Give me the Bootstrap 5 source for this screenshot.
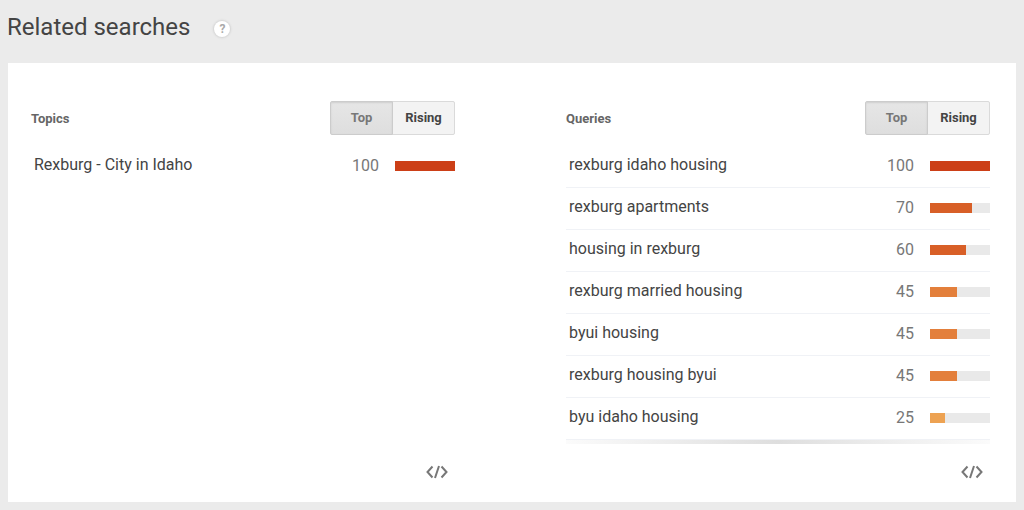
<!DOCTYPE html>
<html lang="en">
<head>
<meta charset="utf-8">
<meta name="viewport" content="width=device-width, initial-scale=1">
<title>Related searches</title>
<link href="https://cdn.jsdelivr.net/npm/bootstrap@5.3.0/dist/css/bootstrap.min.css" rel="stylesheet">
<style>
  body { background: #ebebeb; color: #444; font-family: Roboto, "Liberation Sans", sans-serif; }
  .page-head { padding: 12px 7px 21px; }
  .page-title { font-size: 24px; line-height: 30px; color: #444; }
  .help-btn { width: 16px; height: 16px; background: #fff; color: #aaa; font-size: 12px; line-height: 16px; font-weight: 700; box-shadow: 0 0 2px 1px #d2d2d2; }
  .panel { padding: 38px 26px 20px 23px; }
  .panel-cols { column-gap: 111px; }
  .panel-head { margin-bottom: 10px; }
  .list-title { font-size: 13px; line-height: 20px; font-weight: 700; color: #666; padding-top: 2px; }
  .toggle-btn { width: 63px; height: 34px; padding: 0; font-size: 13px; line-height: 20px; font-weight: 700; color: #444; background: #f3f3f3; border: 1px solid #dadada; border-radius: 2px; }
  .toggle-btn.active { color: #777 !important; background: linear-gradient(#e6e6e6, #dedede) !important; border-color: #ccc !important; box-shadow: inset 0 1px 2px rgba(0,0,0,.1); }
  .terms { font-size: 16px; line-height: 20px; }
  .terms th, .terms td { height: 42px; padding: 0; vertical-align: middle; }
  .terms th { font-weight: 400; padding: 0 0 2px 3px; color: #444; }
  .terms tr + tr > * { border-top: 1px solid #f0f2f6; }
  .terms .score { width: 60px; padding-right: 16px; text-align: right; color: #777; }
  .terms .meter { width: 60px; }
  .track, .fill { height: 10px; }
  .track { background: #e9e9e9; }
  .l100 { background: #cc3f17; }
  .l70 { background: #d85f27; }
  .l45 { background: #e37f3b; }
  .l25 { background: #eda252; }
  .scroll-shade { height: 5px; border-top: 1px solid #f0f2f6; background: linear-gradient(90deg, #fbfbfb, #dedede 50%, #fbfbfb); }
  .embed-btn { margin: 18px 6px 0 0; }
</style>
</head>
<body>
<header class="page-head d-flex align-items-center">
  <h1 class="page-title fw-normal m-0">Related searches</h1>
  <button type="button" class="help-btn border-0 rounded-circle p-0 ms-4 mt-1" aria-label="Help">?</button>
</header>
<main class="px-2 pb-2">
  <div class="panel panel-cols bg-white d-flex">
    <section class="flex-fill w-50 d-flex flex-column">
      <div class="panel-head d-flex align-items-center justify-content-between">
        <h2 class="list-title mb-0">Topics</h2>
        <div class="btn-group" role="group" aria-label="Topics order">
          <button type="button" class="btn toggle-btn active">Top</button>
          <button type="button" class="btn toggle-btn">Rising</button>
        </div>
      </div>
      <table class="terms w-100">
        <tbody>
          <tr><th scope="row">Rexburg - City in Idaho</th><td class="score">100</td><td class="meter"><div class="track"><div class="fill l100" style="width:100%"></div></div></td></tr>
        </tbody>
      </table>
      <button type="button" class="embed-btn btn p-0 border-0 lh-1 align-self-end mt-auto" aria-label="Embed topics">
        <svg width="24" height="20" viewBox="0 0 24 20" fill="none" stroke="#777" stroke-width="2"><path d="M7.500 4.500 2.500 10l5 5.500M16.500 4.500l5 5.500-5 5.500M14 4l-4 12"/></svg>
      </button>
    </section>
    <section class="flex-fill w-50 d-flex flex-column">
      <div class="panel-head d-flex align-items-center justify-content-between">
        <h2 class="list-title mb-0">Queries</h2>
        <div class="btn-group" role="group" aria-label="Queries order">
          <button type="button" class="btn toggle-btn active">Top</button>
          <button type="button" class="btn toggle-btn">Rising</button>
        </div>
      </div>
      <table class="terms w-100">
        <tbody>
          <tr><th scope="row">rexburg idaho housing</th><td class="score">100</td><td class="meter"><div class="track"><div class="fill l100" style="width:100%"></div></div></td></tr>
          <tr><th scope="row">rexburg apartments</th><td class="score">70</td><td class="meter"><div class="track"><div class="fill l70" style="width:70%"></div></div></td></tr>
          <tr><th scope="row">housing in rexburg</th><td class="score">60</td><td class="meter"><div class="track"><div class="fill l70" style="width:60%"></div></div></td></tr>
          <tr><th scope="row">rexburg married housing</th><td class="score">45</td><td class="meter"><div class="track"><div class="fill l45" style="width:45%"></div></div></td></tr>
          <tr><th scope="row">byui housing</th><td class="score">45</td><td class="meter"><div class="track"><div class="fill l45" style="width:45%"></div></div></td></tr>
          <tr><th scope="row">rexburg housing byui</th><td class="score">45</td><td class="meter"><div class="track"><div class="fill l45" style="width:45%"></div></div></td></tr>
          <tr><th scope="row">byu idaho housing</th><td class="score">25</td><td class="meter"><div class="track"><div class="fill l25" style="width:25%"></div></div></td></tr>
        </tbody>
      </table>
      <div class="scroll-shade"></div>
      <button type="button" class="embed-btn btn p-0 border-0 lh-1 align-self-end" aria-label="Embed queries">
        <svg width="24" height="20" viewBox="0 0 24 20" fill="none" stroke="#777" stroke-width="2"><path d="M7.500 4.500 2.500 10l5 5.500M16.500 4.500l5 5.500-5 5.500M14 4l-4 12"/></svg>
      </button>
    </section>
  </div>
</main>
<script src="https://cdn.jsdelivr.net/npm/bootstrap@5.3.0/dist/js/bootstrap.bundle.min.js"></script>
</body>
</html>
